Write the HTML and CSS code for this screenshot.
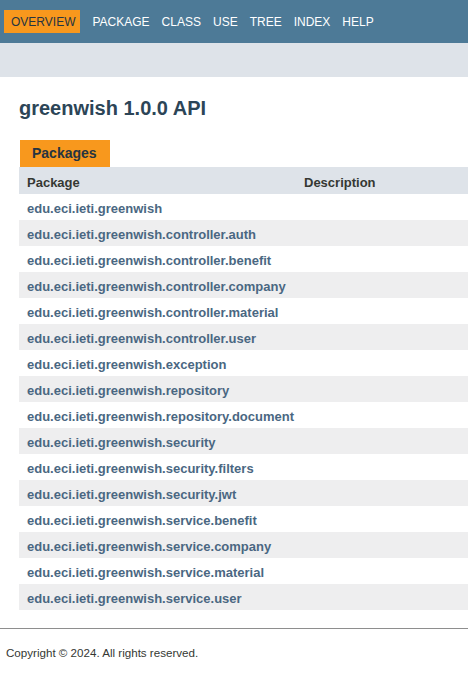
FILE: index.html
```html
<!DOCTYPE html>
<html lang="en">
<head>
<meta charset="utf-8">
<title>Overview (greenwish 1.0.0 API)</title>
<link rel="stylesheet" href="styles.css">
</head>
<body>
<header>
  <nav class="topnav">
    <ul class="navlist">
      <li class="current">Overview</li>
      <li>Package</li>
      <li>Class</li>
      <li>Use</li>
      <li>Tree</li>
      <li>Index</li>
      <li>Help</li>
    </ul>
  </nav>
  <div class="subnav"></div>
</header>
<main class="content">
  <h1 class="title">greenwish 1.0.0 API</h1>
  <div class="caption">Packages</div>
  <table class="summary">
    <thead>
      <tr><th class="col-first">Package</th><th class="col-last">Description</th></tr>
    </thead>
    <tbody>
      <tr><td><a href="#">edu.eci.ieti.greenwish</a></td><td></td></tr>
      <tr><td><a href="#">edu.eci.ieti.greenwish.controller.auth</a></td><td></td></tr>
      <tr><td><a href="#">edu.eci.ieti.greenwish.controller.benefit</a></td><td></td></tr>
      <tr><td><a href="#">edu.eci.ieti.greenwish.controller.company</a></td><td></td></tr>
      <tr><td><a href="#">edu.eci.ieti.greenwish.controller.material</a></td><td></td></tr>
      <tr><td><a href="#">edu.eci.ieti.greenwish.controller.user</a></td><td></td></tr>
      <tr><td><a href="#">edu.eci.ieti.greenwish.exception</a></td><td></td></tr>
      <tr><td><a href="#">edu.eci.ieti.greenwish.repository</a></td><td></td></tr>
      <tr><td><a href="#">edu.eci.ieti.greenwish.repository.document</a></td><td></td></tr>
      <tr><td><a href="#">edu.eci.ieti.greenwish.security</a></td><td></td></tr>
      <tr><td><a href="#">edu.eci.ieti.greenwish.security.filters</a></td><td></td></tr>
      <tr><td><a href="#">edu.eci.ieti.greenwish.security.jwt</a></td><td></td></tr>
      <tr><td><a href="#">edu.eci.ieti.greenwish.service.benefit</a></td><td></td></tr>
      <tr><td><a href="#">edu.eci.ieti.greenwish.service.company</a></td><td></td></tr>
      <tr><td><a href="#">edu.eci.ieti.greenwish.service.material</a></td><td></td></tr>
      <tr><td><a href="#">edu.eci.ieti.greenwish.service.user</a></td><td></td></tr>
    </tbody>
  </table>
</main>
<footer class="footer">
  <hr class="rule">
  <p class="legal">Copyright © 2024. All rights reserved.</p>
</footer>
</body>
</html>
```

FILE: styles.css
```css
html, body {
  margin: 0;
  padding: 0;
}
body {
  font-family: "Liberation Sans", Arial, sans-serif;
  background: #ffffff;
  color: #353833;
}
.topnav {
  height: 43px;
  background: #4d7a97;
  display: flex;
  align-items: center;
  padding-left: 4px;
}
.navlist {
  list-style: none;
  margin: 0;
  padding: 0;
  display: flex;
  align-items: center;
  gap: 12px;
}
.navlist li {
  font-size: 12px;
  text-transform: uppercase;
  color: #ffffff;
  padding-top: 1px;
  line-height: 22px;
}
.navlist li.current {
  background: #f8981d;
  color: #253441;
  padding: 1px 5px 0 7px;
}
.subnav {
  height: 34px;
  background: #dee3e9;
}
.content {
  padding-left: 19px;
}
.title {
  margin: 20px 0 0;
  font-size: 20px;
  font-weight: bold;
  line-height: 23px;
  color: #2c4557;
}
.caption {
  display: inline-block;
  margin: 20px 0 0 1px;
  padding: 0 13px 0 12px;
  height: 27px;
  line-height: 26px;
  background: #f8981d;
  color: #253441;
  font-weight: bold;
  font-size: 14px;
  vertical-align: top;
}
.summary {
  width: 100%;
  border-collapse: collapse;
  table-layout: fixed;
  font-size: 13px;
}
.summary th {
  background: #dee3e9;
  color: #353833;
  text-align: left;
  font-weight: bold;
  height: 27px;
  padding: 5px 8px 0;
  line-height: 22px;
  box-sizing: border-box;
}
.summary .col-first {
  width: 277px;
}
.summary td {
  height: 26px;
  padding: 4px 8px 0;
  line-height: 22px;
  box-sizing: border-box;
}
.summary tbody tr:nth-child(even) {
  background: #eeeeef;
}
.summary a {
  color: #4a6782;
  font-weight: bold;
  text-decoration: none;
}
.footer {
  margin-top: 18px;
}
.rule {
  margin: 0;
  border: 0;
  border-top: 1px solid #8e8e8e;
  height: 0;
}
.legal {
  margin: 17px 0 0 6px;
  font-size: 11.6px;
  color: #353833;
}
```
